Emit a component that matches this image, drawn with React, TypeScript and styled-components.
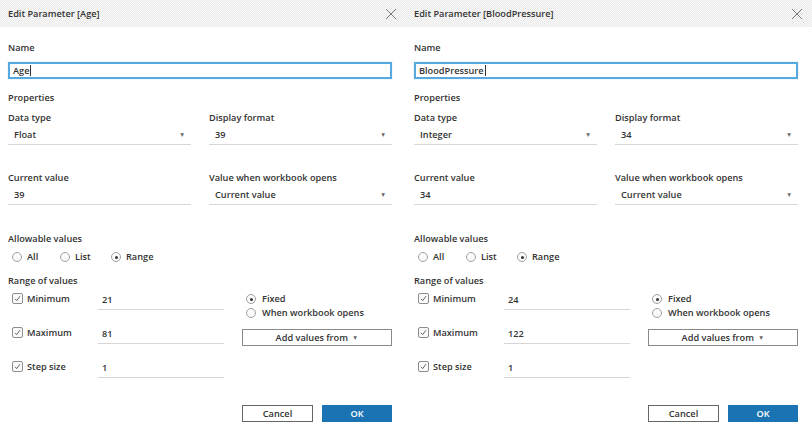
import React from "react";
import styled, { createGlobalStyle } from "styled-components";

const GlobalStyle = createGlobalStyle`
    html, body {
        margin: 0;
        padding: 0;
        background: #ffffff;
    }
    body {
        font-family: "Open Sans", "Liberation Sans", sans-serif;
        color: #333333;
    }
`;

const Page = styled.div`
    display: flex;
    width: 812px;
    height: 427px;
    overflow: hidden;
`;

const Dialog = styled.div`
    width: 406px;
    display: flex;
    flex-direction: column;
`;

const Header = styled.div`
    height: 27px;
    display: flex;
    align-items: center;
    justify-content: space-between;
    padding: 0 8px;
    background: repeating-conic-gradient(#e8e8e8 0 25%, #fbfbfb 0 50%) 0 0 / 2px 2px;
`;

const Title = styled.span`
    font-size: 9.2px;
    font-weight: 600;
    color: #333;
`;

const CloseIcon = styled.svg`
    width: 12px;
    height: 12px;
    margin-right: 1px;
`;

const Body = styled.div`
    width: 384px;
    padding-left: 8px;
    display: flex;
    flex-direction: column;
`;

const Label = styled.div<{ $top: number }>`
    font-size: 9.2px;
    font-weight: 600;
    line-height: 12px;
    margin-top: ${(p) => p.$top}px;
`;

const NameInput = styled.div`
    margin-top: 8px;
    height: 13px;
    border: 2px solid #56a8e0;
    box-shadow: 0 0 1px #9fd0f0;
    display: flex;
    align-items: center;
    padding-left: 3px;
    font-size: 9.2px;
    font-weight: 600;
`;

const Caret = styled.span`
    display: inline-block;
    width: 1px;
    height: 11px;
    background: #333;
    margin-left: 1px;
`;

const TwoCols = styled.div`
    display: grid;
    grid-template-columns: 183px 183px;
    column-gap: 18px;
`;

const Field = styled.div`
    display: flex;
    flex-direction: column;
`;

const Select = styled.div`
    height: 19px;
    border-bottom: 1px solid #d6d6d6;
    display: flex;
    align-items: center;
    justify-content: space-between;
    padding: 0 6px 0 6px;
    font-size: 9.2px;
    font-weight: 600;
    margin-top: 1px;
`;

const Arrow = styled.span`
    font-size: 6.5px;
    color: #666;
    transform: scaleX(0.9);
`;

const RadioRow = styled.div`
    display: flex;
    gap: 14px;
    margin-top: 6px;
    padding-left: 4px;
`;

const RadioItem = styled.label<{ $w?: number }>`
    display: flex;
    align-items: center;
    gap: 5px;
    font-size: 9.2px;
    font-weight: 600;
    line-height: 12px;
    width: ${(p) => (p.$w ? `${p.$w}px` : "auto")};
`;

const Radio = styled.span<{ $on?: boolean }>`
    width: 8px;
    height: 8px;
    border-radius: 50%;
    border: 1px solid #a0a0a0;
    background: #fafafa;
    display: flex;
    align-items: center;
    justify-content: center;

    &::after {
        content: "";
        display: ${(p) => (p.$on ? "block" : "none")};
        width: 3px;
        height: 3px;
        border-radius: 50%;
        background: #333;
    }
`;

const RangeArea = styled.div`
    display: grid;
    grid-template-columns: 216px 150px;
    column-gap: 18px;
    margin-top: 2px;
`;

const RangeRows = styled.div`
    display: flex;
    flex-direction: column;
    gap: 13px;
`;

const RangeRow = styled.div`
    display: grid;
    grid-template-columns: 90px 126px;
    height: 21px;
`;

const CheckLabel = styled.div`
    display: flex;
    align-items: center;
    gap: 4px;
    padding-left: 4px;
    height: 18px;
    font-size: 9.2px;
    font-weight: 600;
`;

const CheckBox = styled.svg`
    width: 11px;
    height: 11px;
`;

const RangeInput = styled.div`
    border-bottom: 1px solid #d6d6d6;
    display: flex;
    align-items: center;
    padding-left: 4px;
    font-size: 9.2px;
    font-weight: 600;
`;

const SideOptions = styled.div`
    display: flex;
    flex-direction: column;
    padding-top: 3px;
`;

const SideRadio = styled(RadioItem)`
    padding-left: 4px;
    gap: 6px;
    line-height: 14px;
`;

const AddValues = styled.div`
    margin-top: 9px;
    height: 15px;
    border: 1px solid #8a8a8a;
    display: flex;
    align-items: center;
    justify-content: center;
    gap: 4px;
    font-size: 9.2px;
    font-weight: 600;
`;

const Footer = styled.div`
    display: flex;
    justify-content: flex-end;
    gap: 9px;
    margin-top: 27px;
`;

const Button = styled.div<{ $primary?: boolean }>`
    width: ${(p) => (p.$primary ? "70px" : "69px")};
    height: ${(p) => (p.$primary ? "17px" : "15px")};
    display: flex;
    align-items: center;
    justify-content: center;
    font-size: 9.2px;
    font-weight: 600;
    background: ${(p) => (p.$primary ? "#1a74b3" : "#ffffff")};
    color: ${(p) => (p.$primary ? "#ffffff" : "#333")};
    border: ${(p) => (p.$primary ? "none" : "1px solid #666")};
`;

const Check = () => (
    <CheckBox viewBox="0 0 11 11">
        <rect x="0.5" y="0.5" width="10" height="10" rx="1.5" fill="#fafafa" stroke="#8c8c8c" />
        <path d="M3 5.8 L4.7 7.6 L8 3.2" fill="none" stroke="#555" strokeWidth="0.9" />
    </CheckBox>
);

type Props = {
    name: string;
    dataType: string;
    format: string;
    current: string;
    min: string;
    max: string;
    step: string;
};

const ParameterDialog = ({ name, dataType, format, current, min, max, step }: Props) => (
    <Dialog>
        <Header>
            <Title>Edit Parameter [{name}]</Title>
            <CloseIcon viewBox="0 0 12 12">
                <path d="M1 1 L11 11 M11 1 L1 11" stroke="#7a7a7a" strokeWidth="1" />
            </CloseIcon>
        </Header>
        <Body>
            <Label $top={15}>Name</Label>
            <NameInput>
                {name}
                <Caret />
            </NameInput>
            <Label $top={13}>Properties</Label>
            <TwoCols>
                <Field>
                    <Label $top={8}>Data type</Label>
                    <Select>
                        {dataType}
                        <Arrow>▼</Arrow>
                    </Select>
                </Field>
                <Field>
                    <Label $top={8}>Display format</Label>
                    <Select>
                        {format}
                        <Arrow>▼</Arrow>
                    </Select>
                </Field>
            </TwoCols>
            <TwoCols>
                <Field>
                    <Label $top={27}>Current value</Label>
                    <Select>{current}</Select>
                </Field>
                <Field>
                    <Label $top={27}>Value when workbook opens</Label>
                    <Select>
                        Current value
                        <Arrow>▼</Arrow>
                    </Select>
                </Field>
            </TwoCols>
            <Label $top={28}>Allowable values</Label>
            <RadioRow>
                <RadioItem $w={34}>
                    <Radio />
                    All
                </RadioItem>
                <RadioItem $w={37}>
                    <Radio />
                    List
                </RadioItem>
                <RadioItem>
                    <Radio $on />
                    Range
                </RadioItem>
            </RadioRow>
            <Label $top={12}>Range of values</Label>
            <RangeArea>
                <RangeRows>
                    <RangeRow>
                        <CheckLabel>
                            <Check />
                            Minimum
                        </CheckLabel>
                        <RangeInput>{min}</RangeInput>
                    </RangeRow>
                    <RangeRow>
                        <CheckLabel>
                            <Check />
                            Maximum
                        </CheckLabel>
                        <RangeInput>{max}</RangeInput>
                    </RangeRow>
                    <RangeRow>
                        <CheckLabel>
                            <Check />
                            Step size
                        </CheckLabel>
                        <RangeInput>{step}</RangeInput>
                    </RangeRow>
                </RangeRows>
                <SideOptions>
                    <SideRadio>
                        <Radio $on />
                        Fixed
                    </SideRadio>
                    <SideRadio>
                        <Radio />
                        When workbook opens
                    </SideRadio>
                    <AddValues>
                        Add values from
                        <Arrow>▼</Arrow>
                    </AddValues>
                </SideOptions>
            </RangeArea>
            <Footer>
                <Button>Cancel</Button>
                <Button $primary>OK</Button>
            </Footer>
        </Body>
    </Dialog>
);

const App = () => (
    <Page>
        <GlobalStyle />
        <ParameterDialog name="Age" dataType="Float" format="39" current="39" min="21" max="81" step="1" />
        <ParameterDialog
            name="BloodPressure"
            dataType="Integer"
            format="34"
            current="34"
            min="24"
            max="122"
            step="1"
        />
    </Page>
);

export default App;
